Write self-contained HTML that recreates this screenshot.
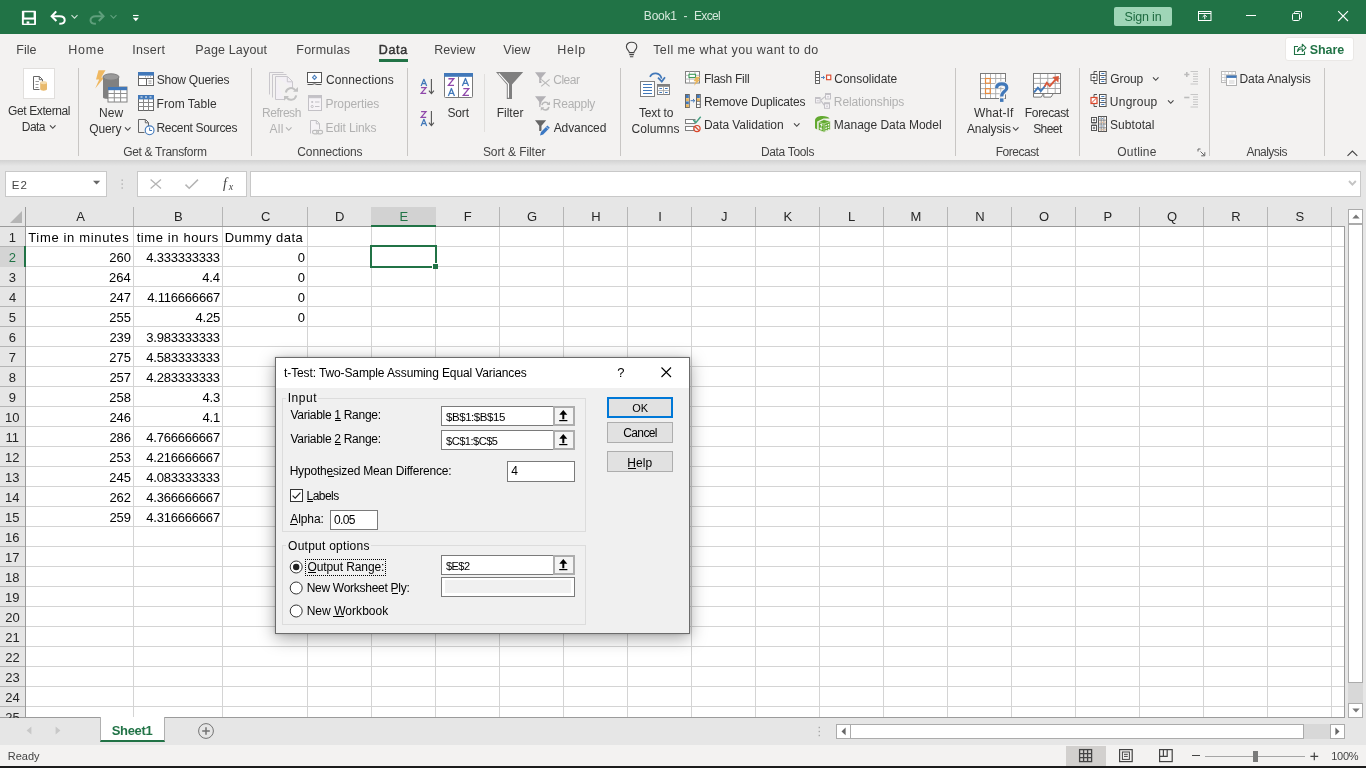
<!DOCTYPE html>
<html><head><meta charset="utf-8"><title>Book1 - Excel</title>
<style>
html,body{margin:0;padding:0;}
body{width:1366px;height:768px;overflow:hidden;position:relative;background:#e6e6e6;font-family:"Liberation Sans",sans-serif;color:#262626;}
#w{position:absolute;left:0;top:0;width:1366px;height:768px;overflow:hidden;will-change:transform;}
#w>div,#w>svg,.a{position:absolute;box-sizing:border-box;}
.t{position:absolute;white-space:pre;line-height:1;font-family:"Liberation Sans",sans-serif;}
</style></head>
<body>
<div id="w">
<div style="left:0px;top:0px;width:1366px;height:34px;background:#217346;"></div>
<span class="t" style="left:643.85px;top:10.00px;font-size:12px;letter-spacing:-0.209px;color:#d5e8dc;">Book1</span>
<span class="t" style="left:683.54px;top:10.00px;font-size:12px;color:#d5e8dc;">-</span>
<span class="t" style="left:693.95px;top:10.00px;font-size:12px;letter-spacing:-0.647px;color:#d5e8dc;">Excel</span>
<div style="left:1114px;top:7px;width:58px;height:19px;background:#9fd5b7;border-radius:2px;"></div>
<span class="t" style="left:1124.50px;top:11.00px;font-size:12.5px;letter-spacing:-0.183px;color:#1e6b41;">Sign in</span>
<div style="left:0px;top:34px;width:1366px;height:126px;background:#f3f2f1;"></div>
<div style="left:0px;top:160px;width:1366px;height:6px;background:linear-gradient(#d2d2d2,#e6e6e6);"></div>
<span class="t" style="left:16.35px;top:44.00px;font-size:12.5px;letter-spacing:-0.048px;color:#444;">File</span>
<span class="t" style="left:68.35px;top:44.00px;font-size:12.5px;letter-spacing:0.722px;color:#444;">Home</span>
<span class="t" style="left:132.29px;top:44.00px;font-size:12.5px;letter-spacing:0.304px;color:#444;">Insert</span>
<span class="t" style="left:195.35px;top:44.00px;font-size:12.5px;letter-spacing:0.152px;color:#444;">Page Layout</span>
<span class="t" style="left:296.35px;top:44.00px;font-size:12.5px;letter-spacing:0.210px;color:#444;">Formulas</span>
<span class="t" style="left:378.65px;top:44.00px;font-size:12.5px;letter-spacing:0.752px;color:#333;-webkit-text-stroke:0.45px #333;">Data</span>
<div style="left:379px;top:59px;width:29px;height:3px;background:#217346;"></div>
<span class="t" style="left:434.35px;top:44.00px;font-size:12.5px;color:#444;">Review</span>
<span class="t" style="left:503.18px;top:44.00px;font-size:12.5px;letter-spacing:0.106px;color:#444;">View</span>
<span class="t" style="left:557.35px;top:44.00px;font-size:12.5px;letter-spacing:0.746px;color:#444;">Help</span>
<span class="t" style="left:653.16px;top:44.00px;font-size:12.5px;letter-spacing:0.420px;color:#444;">Tell me what you want to do</span>
<div style="left:1285px;top:37px;width:69px;height:24px;background:#fff;border:1px solid #eae8e6;border-radius:3px;"></div>
<span class="t" style="left:1309.67px;top:44.00px;font-size:12.5px;letter-spacing:-0.047px;color:#217346;font-weight:bold;">Share</span>
<div style="left:78px;top:68px;width:1px;height:88px;background:#c8c6c4;"></div>
<div style="left:251px;top:68px;width:1px;height:88px;background:#c8c6c4;"></div>
<div style="left:407px;top:68px;width:1px;height:88px;background:#c8c6c4;"></div>
<div style="left:620px;top:68px;width:1px;height:88px;background:#c8c6c4;"></div>
<div style="left:955px;top:68px;width:1px;height:88px;background:#c8c6c4;"></div>
<div style="left:1079px;top:68px;width:1px;height:88px;background:#c8c6c4;"></div>
<div style="left:1209px;top:68px;width:1px;height:88px;background:#c8c6c4;"></div>
<div style="left:1324px;top:68px;width:1px;height:88px;background:#c8c6c4;"></div>
<div style="left:484px;top:74px;width:1px;height:58px;background:#e1dfdd;"></div>
<div style="left:23px;top:68px;width:32px;height:31px;background:#fff;border:1px solid #e1dfdd;"></div>
<span class="t" style="left:8.06px;top:105.00px;font-size:12px;letter-spacing:-0.386px;color:#333;">Get External</span>
<span class="t" style="left:21.85px;top:121.00px;font-size:12px;letter-spacing:-0.555px;color:#333;">Data</span>
<svg class="a" style="left:49px;top:124px" width="7.5" height="6" viewBox="0 0 7.5 6"><path d="M1 1.3L3.75 4.3L6.5 1.3" stroke="#444" stroke-width="1.1" fill="none"/></svg>
<span class="t" style="left:98.95px;top:107.00px;font-size:12px;letter-spacing:0.064px;color:#333;">New</span>
<span class="t" style="left:89.21px;top:123.00px;font-size:12px;letter-spacing:-0.111px;color:#333;">Query</span>
<svg class="a" style="left:123.8px;top:125.5px" width="7.5" height="6" viewBox="0 0 7.5 6"><path d="M1 1.3L3.75 4.3L6.5 1.3" stroke="#444" stroke-width="1.1" fill="none"/></svg>
<span class="t" style="left:156.68px;top:74.00px;font-size:12px;letter-spacing:-0.230px;color:#333;">Show Queries</span>
<span class="t" style="left:156.55px;top:98.00px;font-size:12px;letter-spacing:0.028px;color:#333;">From Table</span>
<span class="t" style="left:156.55px;top:122.00px;font-size:12px;letter-spacing:-0.346px;color:#333;">Recent Sources</span>
<span class="t" style="left:123.16px;top:146.00px;font-size:12px;letter-spacing:-0.305px;color:#444;">Get &amp; Transform</span>
<span class="t" style="left:262.05px;top:107.00px;font-size:12px;letter-spacing:-0.458px;color:#b1b1b1;">Refresh</span>
<span class="t" style="left:269.42px;top:123.00px;font-size:12px;letter-spacing:0.287px;color:#b1b1b1;">All</span>
<svg class="a" style="left:285.2px;top:125.5px" width="7.5" height="6" viewBox="0 0 7.5 6"><path d="M1 1.3L3.75 4.3L6.5 1.3" stroke="#b1b1b1" stroke-width="1.1" fill="none"/></svg>
<span class="t" style="left:325.96px;top:74.00px;font-size:12px;letter-spacing:0.120px;color:#333;">Connections</span>
<span class="t" style="left:325.55px;top:98.00px;font-size:12px;letter-spacing:-0.098px;color:#b1b1b1;">Properties</span>
<span class="t" style="left:325.55px;top:122.00px;font-size:12px;letter-spacing:-0.128px;color:#b1b1b1;">Edit Links</span>
<span class="t" style="left:297.36px;top:146.00px;font-size:12px;letter-spacing:-0.157px;color:#444;">Connections</span>
<span class="t" style="left:447.48px;top:107.00px;font-size:12px;letter-spacing:-0.149px;color:#333;">Sort</span>
<span class="t" style="left:496.65px;top:107.00px;font-size:12px;letter-spacing:0.015px;color:#333;">Filter</span>
<span class="t" style="left:553.26px;top:74.00px;font-size:12px;letter-spacing:-0.497px;color:#b1b1b1;">Clear</span>
<span class="t" style="left:552.85px;top:98.00px;font-size:12px;letter-spacing:-0.253px;color:#b1b1b1;">Reapply</span>
<span class="t" style="left:553.72px;top:122.00px;font-size:12px;letter-spacing:-0.111px;color:#333;">Advanced</span>
<span class="t" style="left:482.88px;top:146.00px;font-size:12px;letter-spacing:-0.061px;color:#444;">Sort &amp; Filter</span>
<span class="t" style="left:638.88px;top:107.00px;font-size:12px;letter-spacing:-0.124px;color:#333;">Text to</span>
<span class="t" style="left:631.46px;top:123.00px;font-size:12px;letter-spacing:0.109px;color:#333;">Columns</span>
<span class="t" style="left:703.95px;top:73.00px;font-size:12px;letter-spacing:-0.264px;color:#333;">Flash Fill</span>
<span class="t" style="left:703.95px;top:96.00px;font-size:12px;letter-spacing:-0.151px;color:#333;">Remove Duplicates</span>
<span class="t" style="left:703.95px;top:119.00px;font-size:12px;letter-spacing:-0.060px;color:#333;">Data Validation</span>
<svg class="a" style="left:792.6px;top:121.5px" width="7.5" height="6" viewBox="0 0 7.5 6"><path d="M1 1.3L3.75 4.3L6.5 1.3" stroke="#444" stroke-width="1.1" fill="none"/></svg>
<span class="t" style="left:834.26px;top:73.00px;font-size:12px;letter-spacing:-0.034px;color:#333;">Consolidate</span>
<span class="t" style="left:833.85px;top:96.00px;font-size:12px;letter-spacing:-0.129px;color:#b1b1b1;">Relationships</span>
<span class="t" style="left:833.85px;top:119.00px;font-size:12px;letter-spacing:-0.020px;color:#333;">Manage Data Model</span>
<span class="t" style="left:760.95px;top:146.00px;font-size:12px;letter-spacing:-0.333px;color:#444;">Data Tools</span>
<span class="t" style="left:974.07px;top:107.00px;font-size:12px;letter-spacing:0.087px;color:#333;">What-If</span>
<span class="t" style="left:966.92px;top:123.00px;font-size:12px;letter-spacing:-0.098px;color:#333;">Analysis</span>
<svg class="a" style="left:1012px;top:125.5px" width="7.5" height="6" viewBox="0 0 7.5 6"><path d="M1 1.3L3.75 4.3L6.5 1.3" stroke="#444" stroke-width="1.1" fill="none"/></svg>
<span class="t" style="left:1024.85px;top:107.00px;font-size:12px;letter-spacing:-0.334px;color:#333;">Forecast</span>
<span class="t" style="left:1033.18px;top:123.00px;font-size:12px;letter-spacing:-0.557px;color:#333;">Sheet</span>
<span class="t" style="left:995.65px;top:146.00px;font-size:12px;letter-spacing:-0.477px;color:#444;">Forecast</span>
<span class="t" style="left:1110.26px;top:73.00px;font-size:12px;letter-spacing:-0.102px;color:#333;">Group</span>
<svg class="a" style="left:1152.4px;top:75.5px" width="7.5" height="6" viewBox="0 0 7.5 6"><path d="M1 1.3L3.75 4.3L6.5 1.3" stroke="#444" stroke-width="1.1" fill="none"/></svg>
<span class="t" style="left:1109.85px;top:96.00px;font-size:12px;letter-spacing:0.237px;color:#333;">Ungroup</span>
<svg class="a" style="left:1166.5px;top:98.5px" width="7.5" height="6" viewBox="0 0 7.5 6"><path d="M1 1.3L3.75 4.3L6.5 1.3" stroke="#444" stroke-width="1.1" fill="none"/></svg>
<span class="t" style="left:1109.98px;top:119.00px;font-size:12px;letter-spacing:0.060px;color:#333;">Subtotal</span>
<span class="t" style="left:1117.31px;top:146.00px;font-size:12px;letter-spacing:0.174px;color:#444;">Outline</span>
<span class="t" style="left:1239.55px;top:73.00px;font-size:12px;letter-spacing:-0.126px;color:#333;">Data Analysis</span>
<span class="t" style="left:1246.52px;top:146.00px;font-size:12px;letter-spacing:-0.543px;color:#444;">Analysis</span>
<svg class="a" style="left:1346px;top:149px" width="13" height="9" viewBox="0 0 13 9"><path d="M1.5 6.8L6.4 2L11.3 6.8" stroke="#444" stroke-width="1.1" fill="none"/></svg>
<svg class="a" style="left:1197px;top:148px" width="9" height="9" viewBox="0 0 9 9"><path d="M1 3.5V1H3.5M3.5 3.5L7.5 7.5M7.8 4.2V7.8H4.2" stroke="#666" stroke-width="1" fill="none"/></svg>
<svg class="a" style="left:21px;top:10px" width="16" height="16" viewBox="0 0 16 16" ><rect x="0.9" y="0.8" width="14.1" height="14.2" rx="0.8" fill="#fff"/><rect x="3.3" y="2.3" width="9.3" height="5.2" fill="#217346"/><rect x="2.8" y="9.6" width="10.3" height="4" fill="#217346"/><rect x="5.6" y="11.4" width="2.7" height="2.3" fill="#fff"/></svg>
<svg class="a" style="left:50px;top:9px" width="17" height="17" viewBox="0 0 17 17" ><path d="M6.2 2.4L1.7 7.3L6.4 12" fill="none" stroke="#fff" stroke-width="2.1"/><path d="M2 7.3H9.6C13 7.3 14.7 9 14.7 11.2C14.7 13.7 12.6 14.8 9.3 14.8" fill="none" stroke="#fff" stroke-width="2"/></svg>
<svg class="a" style="left:70px;top:14px" width="9" height="6" viewBox="0 0 9 6" ><path d="M1.5 1.2L4.5 4.2L7.5 1.2" fill="none" stroke="#cfe3d7" stroke-width="1.1"/></svg>
<svg class="a" style="left:89px;top:9px" width="17" height="17" viewBox="0 0 17 17" ><path d="M10 2.4L14.5 7.3L9.8 12" fill="none" stroke="#5f9f7c" stroke-width="2.1"/><path d="M14.2 7.3H6.6C3.2 7.3 1.5 9 1.5 11.2C1.5 13.7 3.6 14.8 6.9 14.8" fill="none" stroke="#5f9f7c" stroke-width="2"/></svg>
<svg class="a" style="left:109px;top:14px" width="9" height="6" viewBox="0 0 9 6" ><path d="M1.5 1.2L4.5 4.2L7.5 1.2" fill="none" stroke="#5f9f7c" stroke-width="1.1"/></svg>
<svg class="a" style="left:132px;top:14px" width="8" height="8" viewBox="0 0 8 8" ><path d="M1 1.5H6.6" stroke="#fff" stroke-width="1.1"/><path d="M0.8 3.8H6.8L3.8 7.2Z" fill="#fff"/></svg>
<svg class="a" style="left:1197px;top:10px" width="16" height="12" viewBox="0 0 16 12" ><rect x="1.5" y="1.5" width="12.5" height="9" fill="none" stroke="#fff" stroke-width="1"/><path d="M1.5 3.5H14" stroke="#fff" stroke-width="1"/><path d="M7.75 9.2V5.2M5.6 7L7.75 4.9L9.9 7" fill="none" stroke="#fff" stroke-width="1"/></svg>
<svg class="a" style="left:1246px;top:15px" width="10" height="1" viewBox="0 0 10 1" ><rect width="10" height="1" fill="#fff"/></svg>
<svg class="a" style="left:1291px;top:10px" width="12" height="12" viewBox="0 0 12 12" ><rect x="1.5" y="3.5" width="7" height="7" rx="1" fill="none" stroke="#fff" stroke-width="1"/><path d="M3.5 3.2V2.5Q3.5 1.5 4.5 1.5H9.5Q10.5 1.5 10.5 2.5V7.5Q10.5 8.5 9.5 8.5H8.8" fill="none" stroke="#fff" stroke-width="1"/></svg>
<svg class="a" style="left:1337px;top:10px" width="12" height="12" viewBox="0 0 12 12" ><path d="M1.2 1.2L11 11M11 1.2L1.2 11" stroke="#fff" stroke-width="1.1"/></svg>
<svg class="a" style="left:624px;top:41px" width="16" height="18" viewBox="0 0 16 18" ><path d="M5.3 11.6C5.3 9.8 2.4 8.6 2.4 5.7C2.4 3.1 4.5 1.3 7.6 1.3C10.7 1.3 12.8 3.1 12.8 5.7C12.8 8.6 9.9 9.8 9.9 11.6Z" fill="none" stroke="#444" stroke-width="1.1"/><path d="M5.3 13.6H9.9M5.9 15.8H9.3" stroke="#444" stroke-width="1.1"/></svg>
<svg class="a" style="left:1293px;top:42px" width="14" height="14" viewBox="0 0 14 14" ><path d="M5 4.5H1.5V12.5H11.5V9.5" fill="none" stroke="#217346" stroke-width="1.1"/><path d="M4.5 9.5C4.8 6.5 6.6 4.8 9.3 4.7V2.2L13 5.8L9.3 9.3V6.8C7.3 6.8 5.6 7.7 4.5 9.5Z" fill="none" stroke="#217346" stroke-width="1.1" stroke-linejoin="round"/></svg>
<svg class="a" style="left:32px;top:75px" width="17" height="17" viewBox="0 0 17 17" ><path d="M1.5 1.5H7.5L10.5 4.5V8M1.5 1.5V14.5H7.5" fill="none" stroke="#666" stroke-width="1"/><path d="M7.3 1.7V4.7H10.3" fill="none" stroke="#666" stroke-width="1"/><path d="M3.5 6.5H7M3.5 9.5H6.5M3.5 12.5H6.5" stroke="#9a9a9a" stroke-width="1"/><path d="M8.2 7.6V14.3C8.2 16.2 15 16.2 15 14.3V7.6" fill="#e9ba6c"/><ellipse cx="11.6" cy="7.6" rx="3.4" ry="1.6" fill="#f5dcae"/></svg>
<svg class="a" style="left:93px;top:69px" width="36" height="34" viewBox="0 0 36 34" ><path d="M5.5 1.2H12.5L8.2 8.5H11.2L2.2 19.5L6.2 10.5H3Z" fill="#efb861"/><path d="M10 8V28.5C10 30.5 26 30.5 26 28.5V8Z" fill="#808080"/><ellipse cx="18" cy="8" rx="8" ry="3.2" fill="#9a9a9a" stroke="#808080" stroke-width="1"/><rect x="15" y="18" width="19" height="15" fill="#fff" stroke="#808080" stroke-width="1"/><rect x="15" y="18" width="19" height="3.2" fill="#4178b9"/><path d="M15 24.5H34M15 28.8H34M21.3 21V33M27.6 21V33" stroke="#909090" stroke-width="1"/></svg>
<svg class="a" style="left:138px;top:71px" width="17" height="16" viewBox="0 0 17 16" ><rect x="0.5" y="1.5" width="15" height="13" fill="#fff" stroke="#666" stroke-width="1"/><rect x="0.5" y="1.5" width="15" height="2.6" fill="#4178b9" stroke="#4178b9"/><path d="M0.5 7.5H15.5M8.5 7.5V14.5" stroke="#666" stroke-width="1"/><path d="M7 5.8H8M9.5 5.8H10.5M12 5.8H13M10.5 10H13.5M10.5 12.2H13.5" stroke="#888" stroke-width="0.9"/></svg>
<svg class="a" style="left:138px;top:94px" width="17" height="18" viewBox="0 0 17 18" ><rect x="0.5" y="1.5" width="15" height="15" fill="#fff" stroke="#666" stroke-width="1"/><rect x="0.5" y="1.5" width="15" height="3.4" fill="#4178b9" stroke="#4178b9"/><path d="M2.5 3H4.5M7 3H9M11.5 3H13.5" stroke="#fff" stroke-width="1"/><path d="M0.5 8.5H15.5M0.5 12.5H15.5M5.5 5V16.5M10.5 5V16.5" stroke="#888" stroke-width="1"/></svg>
<svg class="a" style="left:138px;top:119px" width="18" height="17" viewBox="0 0 18 17" ><path d="M0.5 0.5H7.5L10.5 3.5V8M0.5 0.5V13.5H6.5" fill="none" stroke="#666" stroke-width="1"/><path d="M7.3 0.8V3.8H10.3" fill="none" stroke="#666" stroke-width="1"/><circle cx="11.6" cy="11.3" r="4.4" fill="#fff" stroke="#4178b9" stroke-width="1.1"/><path d="M11.6 8.6V11.5H14" fill="none" stroke="#4178b9" stroke-width="1"/></svg>
<svg class="a" style="left:268px;top:71px" width="32" height="32" viewBox="0 0 32 32" ><path d="M1.5 23.5V1.5H15.5" fill="none" stroke="#c9c7cc" stroke-width="1"/><path d="M4.5 26.5V3.5H18.5" fill="none" stroke="#c9c7cc" stroke-width="1"/><path d="M7.5 5.5H19.5L24.5 10.5V17M7.5 5.5V28.5H16" fill="#f3f0f5" stroke="#c9c7cc" stroke-width="1"/><path d="M19.3 5.8V10.8H24.3" fill="none" stroke="#c9c7cc" stroke-width="1"/><path d="M17.8 21.5A5.3 5.3 0 0 1 27.3 19.2" fill="none" stroke="#c2c2c2" stroke-width="2"/><path d="M28.2 24.3A5.3 5.3 0 0 1 18.7 26.6" fill="none" stroke="#c2c2c2" stroke-width="2"/><path d="M25 20.8H30V16Z" fill="#c2c2c2"/><path d="M21 25H16V29.8Z" fill="#c2c2c2"/></svg>
<svg class="a" style="left:306px;top:71px" width="17" height="15" viewBox="0 0 17 15" ><rect x="1.5" y="1.5" width="14" height="10" fill="#fff" stroke="#555" stroke-width="1"/><path d="M1.5 13.5H6Q8.5 12 11 13.5H15.5" fill="none" stroke="#555" stroke-width="1"/><path d="M8.5 3.6L11.2 6.4L8.5 9.2L5.8 6.4Z" fill="#4178b9"/><rect x="7.6" y="5.5" width="1.8" height="1.8" fill="#fff"/></svg>
<svg class="a" style="left:307px;top:94px" width="16" height="18" viewBox="0 0 16 18" ><rect x="1.5" y="1.5" width="13" height="15" fill="#f6f3f7" stroke="#c3c1c6" stroke-width="1"/><rect x="1.5" y="1.5" width="13" height="2.2" fill="#c3c1c6" stroke="#c3c1c6"/><circle cx="5.2" cy="8" r="1.1" fill="#c3c1c6"/><circle cx="5.2" cy="12.5" r="1.1" fill="none" stroke="#c3c1c6"/><path d="M8 8H12.5M8 12.5H12.5" stroke="#c3c1c6" stroke-width="1"/></svg>
<svg class="a" style="left:309px;top:119px" width="15" height="17" viewBox="0 0 15 17" ><path d="M1.5 14.5V1.5H7.5L10.5 4.5V10" fill="#f6f3f7" stroke="#c3c1c6" stroke-width="1"/><path d="M7.3 1.8V4.8H10.3" fill="none" stroke="#c3c1c6" stroke-width="1"/><rect x="3.5" y="11.3" width="6" height="3.6" rx="1.8" fill="none" stroke="#bdbdbd" stroke-width="1.2"/><rect x="7.6" y="11.3" width="6" height="3.6" rx="1.8" fill="none" stroke="#bdbdbd" stroke-width="1.2"/></svg>
<svg class="a" style="left:420px;top:78px" width="16" height="17" viewBox="0 0 16 17" ><path d="M1.125 8L3.9000000000000004 1.3L6.675000000000001 8M1.9800000000000002 5.62H5.820000000000001" fill="none" stroke="#4178b9" stroke-width="1.25" stroke-linejoin="round"/><path d="M1.1 9.625H6.0L1.1 15.375H6.2" fill="none" stroke="#8f48aa" stroke-width="1.25" stroke-linejoin="miter"/><path d="M11.4 1V15.6M8.9 12.6L11.4 15.6L13.9 12.6" fill="none" stroke="#555" stroke-width="1.1"/></svg>
<svg class="a" style="left:420px;top:110px" width="16" height="17" viewBox="0 0 16 17" ><path d="M1.1 1.625H6.0L1.1 7.375H6.2" fill="none" stroke="#8f48aa" stroke-width="1.25" stroke-linejoin="miter"/><path d="M1.125 16L3.9000000000000004 9.3L6.675000000000001 16M1.9800000000000002 13.620000000000001H5.820000000000001" fill="none" stroke="#4178b9" stroke-width="1.25" stroke-linejoin="round"/><path d="M11.4 1V15.6M8.9 12.6L11.4 15.6L13.9 12.6" fill="none" stroke="#555" stroke-width="1.1"/></svg>
<svg class="a" style="left:444px;top:72px" width="30" height="27" viewBox="0 0 30 27" ><rect x="0.5" y="1.5" width="28" height="24" rx="1" fill="#fff" stroke="#7a7a7a" stroke-width="1"/><rect x="0" y="1" width="29" height="3.8" fill="#4178b9"/><path d="M14.5 4.8V25.5" stroke="#7a7a7a" stroke-width="1"/><path d="M4.3999999999999995 6.75H9.8L4.3999999999999995 13.45H10.0" fill="none" stroke="#8f48aa" stroke-width="1.3" stroke-linejoin="miter"/><path d="M4.35 23.9L7.4 16.5L10.45 23.9M5.3 21.282H9.5" fill="none" stroke="#4178b9" stroke-width="1.3" stroke-linejoin="round"/><path d="M18.349999999999998 14.1L21.45 6.3999999999999995L24.55 14.1M19.32 11.379999999999999H23.58" fill="none" stroke="#4178b9" stroke-width="1.3" stroke-linejoin="round"/><path d="M19.3 16.65H24.8L19.3 23.35H25" fill="none" stroke="#8f48aa" stroke-width="1.3" stroke-linejoin="miter"/></svg>
<svg class="a" style="left:495px;top:71px" width="30" height="29" viewBox="0 0 30 29" ><path d="M1 1H28.2L17 13.5V28H11.8V13.5Z" fill="#7f7f7f"/><path d="M3.8 2.3L13.4 12.9V26.8" fill="none" stroke="#fff" stroke-width="1.2"/></svg>
<svg class="a" style="left:534px;top:71px" width="18" height="17" viewBox="0 0 18 17" ><path d="M1 1.2H12.2L7.5 6.8V11.9H5.2V6.8Z" fill="#b3b1b5"/><path d="M7.2 8.4L15.6 15.4M15.6 8.4L7.2 15.4" stroke="#f3f2f1" stroke-width="2.6"/><path d="M7.2 8.4L15.6 15.4M15.6 8.4L7.2 15.4" stroke="#b9b9b9" stroke-width="1.2"/></svg>
<svg class="a" style="left:534px;top:95px" width="18" height="18" viewBox="0 0 18 18" ><path d="M1 1.2H12.2L7.5 6.8V11.9H5.2V6.8Z" fill="#b3b1b5"/><circle cx="11.4" cy="11.1" r="5" fill="#f3f2f1"/><path d="M7.9 10.2A3.6 3.6 0 0 1 14.4 8.8" fill="none" stroke="#b9b9b9" stroke-width="1.6"/><path d="M14.9 12A3.6 3.6 0 0 1 8.4 13.4" fill="none" stroke="#b9b9b9" stroke-width="1.6"/><path d="M12.6 9.9H16V6.5Z" fill="#b9b9b9"/><path d="M10.2 12.3H6.8V15.7Z" fill="#b9b9b9"/></svg>
<svg class="a" style="left:534px;top:119px" width="18" height="17" viewBox="0 0 18 17" ><path d="M1 1.2H12.2L7.5 6.8V11.9H5.2V6.8Z" fill="#666"/><path d="M13.4 6.4L15.8 8.8L9.2 15.4L6 16.4L7 13Z" fill="#f3f2f1" stroke="#f3f2f1" stroke-width="1.4"/><path d="M13.4 6.4L15.8 8.8L9.2 15.4L6 16.4L7 13Z" fill="#3b78c3"/><path d="M12.2 7.8L14.4 10" stroke="#f3f2f1" stroke-width="0.7"/></svg>
<svg class="a" style="left:639px;top:71px" width="32" height="27" viewBox="0 0 32 27" ><rect x="1.5" y="10.5" width="14" height="15" fill="#fff" stroke="#808080" stroke-width="1"/><path d="M4 13.5H13M4 16.5H13M4 19.5H13M4 22.5H13" stroke="#4178b9" stroke-width="1"/><rect x="18.5" y="13.5" width="12" height="10" fill="#fff" stroke="#808080" stroke-width="1"/><rect x="18.5" y="13.5" width="12" height="2.3" fill="#808080"/><path d="M24.5 16V23.5M18.5 19.6H30.5" stroke="#a0a0a0" stroke-width="0.8"/><path d="M20.3 17.5H23M26 17.5H28.7M20.3 21.5H23M26 21.5H28.7" stroke="#4178b9" stroke-width="1"/><path d="M11 5.8C13 1.2 21 0.6 22.6 7.6" fill="none" stroke="#4178b9" stroke-width="1.7"/><path d="M19 6.6L22.8 10.6L26 6.2" fill="none" stroke="#4178b9" stroke-width="1.7"/></svg>
<svg class="a" style="left:684px;top:70px" width="18" height="17" viewBox="0 0 18 17" ><rect x="1.5" y="1.5" width="14" height="11.5" fill="#fff" stroke="#808080" stroke-width="1"/><path d="M1.5 5.3H15.5M1.5 9.1H15.5M5.5 1.5V13M11 1.5V5" stroke="#b0b0b0" stroke-width="0.9"/><rect x="5" y="4.3" width="6.5" height="3.2" fill="#fff" stroke="#3f9c5a" stroke-width="1.1"/><path d="M12 6.8H16.5L14 10H16L10 15.8L11.8 11.3H9.6Z" fill="#eab65c"/></svg>
<svg class="a" style="left:684px;top:93px" width="18" height="16" viewBox="0 0 18 16" ><rect x="1.5" y="1.5" width="3.8" height="13" fill="#fff" stroke="#666" stroke-width="1"/><rect x="2" y="2" width="2.8" height="3" fill="#4178b9"/><rect x="2" y="5.2" width="2.8" height="3" fill="#eab65c"/><rect x="2" y="8.4" width="2.8" height="3" fill="#4178b9"/><rect x="2" y="11.4" width="2.8" height="2.8" fill="#eab65c"/><rect x="12.5" y="1.5" width="3.8" height="13" fill="#fff" stroke="#666" stroke-width="1"/><rect x="13" y="2" width="2.8" height="3" fill="#4178b9"/><rect x="13" y="5.2" width="2.8" height="3" fill="#eab65c"/><path d="M12.5 8.4H16.3M12.5 11.4H16.3" stroke="#666" stroke-width="0.8"/><path d="M6.6 7.7H10.6M9 6L10.8 7.7L9 9.4" fill="none" stroke="#4178b9" stroke-width="1"/></svg>
<svg class="a" style="left:684px;top:115px" width="19" height="19" viewBox="0 0 19 19" ><rect x="1.5" y="4.5" width="9.5" height="4" fill="#fff" stroke="#808080" stroke-width="1"/><rect x="1.5" y="11.5" width="8.5" height="4" fill="#fff" stroke="#808080" stroke-width="1"/><path d="M9.2 5L11.8 7.6L16.7 1.7" fill="none" stroke="#45a081" stroke-width="1.4"/><circle cx="13" cy="13.6" r="3.1" fill="#f3f2f1" stroke="#d9472b" stroke-width="1.2"/><path d="M10.9 11.5L15.1 15.7" stroke="#d9472b" stroke-width="1.2"/></svg>
<svg class="a" style="left:814px;top:70px" width="18" height="15" viewBox="0 0 18 15" ><rect x="1.5" y="1.5" width="4" height="12" fill="#fff" stroke="#666" stroke-width="1"/><path d="M1.5 4.5H5.5M1.5 7.5H5.5M1.5 10.5H5.5" stroke="#666" stroke-width="1"/><path d="M7 7.5H10.4M9 6L10.6 7.5L9 9" fill="none" stroke="#4178b9" stroke-width="0.9"/><rect x="12.6" y="5.1" width="4.2" height="4.6" fill="#fff" stroke="#d9472b" stroke-width="1.1"/></svg>
<svg class="a" style="left:814px;top:92px" width="18" height="18" viewBox="0 0 18 18" ><path d="M6.5 8.2L11 4.6M6.5 8.2L10.4 13.4" stroke="#c3c1c6" stroke-width="1.1"/><rect x="1.5" y="5.5" width="4.6" height="5.4" fill="#f6f3f7" stroke="#c3c1c6" stroke-width="1"/><path d="M1.5 6.2H6.1" stroke="#c3c1c6" stroke-width="1.6"/><path d="M2.8 8.799999999999999H4.8" stroke="#c3c1c6" stroke-width="0.9"/><rect x="11.5" y="1.5" width="5" height="5.5" fill="#f6f3f7" stroke="#c3c1c6" stroke-width="1"/><path d="M11.5 2.2H16.5" stroke="#c3c1c6" stroke-width="1.6"/><path d="M13.0 4.85H15.0" stroke="#c3c1c6" stroke-width="0.9"/><rect x="10.5" y="10.8" width="5" height="5.5" fill="#f6f3f7" stroke="#c3c1c6" stroke-width="1"/><path d="M10.5 11.5H15.5" stroke="#c3c1c6" stroke-width="1.6"/><path d="M12.0 14.15H14.0" stroke="#c3c1c6" stroke-width="0.9"/></svg>
<svg class="a" style="left:814px;top:115px" width="18" height="18" viewBox="0 0 18 18" ><path d="M1 5.6C1 2.4 4.6 1 8.4 1C11.8 1 14.8 1.9 15.6 3.5L9.6 3.4L3.2 6.4V14.6L1 13.2Z" fill="#62a930"/><path d="M4.3 7L9.9 4.5L16.3 6.2V14.6L10 17.2L4.3 15Z" fill="#62a930" stroke="#f3f2f1" stroke-width="0.7"/><path d="M4.6 7.1L10 8.9L16 6.5M10 8.9V16.8" fill="none" stroke="#cfe6b8" stroke-width="0.7"/><path d="M11.4 10.2L12.8 9.7V11.1L11.4 11.6ZM13.8 9.3L15.2 8.8V10.2L13.8 10.7ZM11.4 12.8L12.8 12.3V13.7L11.4 14.2ZM13.8 11.9L15.2 11.4V12.8L13.8 13.3ZM11.4 15.2L12.8 14.7V15.7L11.4 16.3ZM13.8 14.4L15.2 13.9V14.9L13.8 15.5Z" fill="#fff"/><path d="M5.6 13.2L8.4 14.2M7 12.2V15.2M6.2 9.6L7.4 9L8.4 10.4M7.4 9.2V11.6" fill="none" stroke="#fff" stroke-width="0.9"/></svg>
<svg class="a" style="left:979px;top:72px" width="32" height="32" viewBox="0 0 32 32" ><rect x="1.5" y="1.5" width="25" height="25" fill="#fff" stroke="#7a7a7a" stroke-width="1"/><path d="M2 6.5H26M2 11.5H26M2 16.6H26M2 21.7H26M6.5 2V26M11.5 2V26M16.7 2V26M21.8 2V26" stroke="#a8a8a8" stroke-width="0.9"/><rect x="6.5" y="6.5" width="4.7" height="4.7" fill="#fff" stroke="#e98a3a" stroke-width="1.2"/><rect x="6.5" y="16.7" width="4.7" height="4.7" fill="#fff" stroke="#e98a3a" stroke-width="1.2"/><path d="M17.6 16.2C17.6 13 20 11.9 22.8 11.9C25.8 11.9 27.8 13.4 27.8 15.9C27.8 19.6 22.7 19.2 22.7 24.4" fill="none" stroke="#f3f2f1" stroke-width="5.6"/><rect x="20" y="25.4" width="5.5" height="5.5" fill="#f3f2f1"/><path d="M17.6 16.2C17.6 13 20 11.9 22.8 11.9C25.8 11.9 27.8 13.4 27.8 15.9C27.8 19.6 22.7 19.2 22.7 24.4" fill="none" stroke="#4178b9" stroke-width="3.2"/><rect x="21" y="26.4" width="3.5" height="3.5" fill="#4178b9"/></svg>
<svg class="a" style="left:1032px;top:72px" width="30" height="27" viewBox="0 0 30 27" ><path d="M1.5 21.5V25.1H9.3L11.3 21.5M11.8 21.5V25.1H19L21.3 21.5" fill="#fff" stroke="#7a7a7a" stroke-width="1"/><rect x="1.5" y="1.5" width="27" height="20" fill="#fff" stroke="#7a7a7a" stroke-width="1"/><path d="M2 6.4H28M2 11.4H28M2 16.5H28M8.4 2V21M15.8 2V21M23.2 2V21" stroke="#a0a0a0" stroke-width="0.9"/><path d="M2 20.4L5.9 15.8L8.9 19L13 14" fill="none" stroke="#4178b9" stroke-width="1.9"/><path d="M12.6 14.4L14.8 10.8L17.8 14.1L25 5.8" fill="none" stroke="#d8583a" stroke-width="1.9"/><path d="M20.2 4.9L26.9 4.1L26.4 10.6Z" fill="#d8583a"/></svg>
<svg class="a" style="left:1090px;top:70px" width="18" height="15" viewBox="0 0 18 15" ><path d="M7 1.5H4V4M4 11V13.5H7" fill="none" stroke="#555" stroke-width="1"/><rect x="1" y="4.5" width="6" height="6" fill="#fff" stroke="#555" stroke-width="1"/><path d="M2.6 7.5H5.4M4 6.1V8.9" stroke="#555" stroke-width="1"/><rect x="9.5" y="1.5" width="6.6" height="12" fill="#fff" stroke="#555" stroke-width="1"/><path d="M9.5 5.5H16M9.5 9.5H16" stroke="#555" stroke-width="0.9"/><path d="M11.3 3.5H14.4M11.3 7.5H14.4M11.3 11.5H14.4" stroke="#4178b9" stroke-width="1.1"/></svg>
<svg class="a" style="left:1090px;top:93px" width="18" height="15" viewBox="0 0 18 15" ><path d="M7 1.5H4V4M4 11V13.5H7" fill="none" stroke="#555" stroke-width="1"/><rect x="1" y="4.5" width="6" height="6" fill="#fff" stroke="#d9472b" stroke-width="1.2"/><path d="M1.5 10L6.5 5" stroke="#d9472b" stroke-width="1"/><rect x="9.5" y="1.5" width="6.6" height="12" fill="#fff" stroke="#555" stroke-width="1"/><path d="M9.5 5.5H16M9.5 9.5H16" stroke="#555" stroke-width="0.9"/><path d="M11.3 3.5H14.4M11.3 7.5H14.4M11.3 11.5H14.4" stroke="#4178b9" stroke-width="1.1"/></svg>
<svg class="a" style="left:1090px;top:115px" width="18" height="18" viewBox="0 0 18 18" ><rect x="1.5" y="2.5" width="5" height="5" fill="#fff" stroke="#555" stroke-width="1"/><path d="M2.7 5H5.3M4 3.7V6.3" stroke="#555" stroke-width="0.9"/><rect x="1.5" y="10.5" width="5" height="5" fill="#fff" stroke="#555" stroke-width="1"/><path d="M2.7 13H5.3M4 11.7V14.3" stroke="#555" stroke-width="0.9"/><path d="M6.5 9H1.5" stroke="#555" stroke-width="0.9"/><rect x="8.5" y="1.5" width="8" height="15" fill="#fff" stroke="#555" stroke-width="1"/><path d="M8.5 5.2H16.5M8.5 9H16.5M8.5 12.8H16.5M11.2 1.5V16.5M13.9 1.5V16.5" stroke="#777" stroke-width="0.8"/><path d="M9.6 3.6H10.4M12.2 3.6H13M9.6 11H10.4M12.2 11H13" stroke="#4178b9" stroke-width="1"/><path d="M9.6 7.2H10.4M12.2 7.2H13M14.8 7.2H15.6M9.6 14.8H10.4M12.2 14.8H13M14.8 14.8H15.6" stroke="#e98a3a" stroke-width="1"/></svg>
<svg class="a" style="left:1183px;top:70px" width="16" height="15" viewBox="0 0 16 15" ><path d="M1.2 4.5H6.4M3.8 1.9V7.1" stroke="#bcbcbc" stroke-width="1.6"/><path d="M7.5 1.5H15M10 4H15M10 6.5H15M10 9H15M10 11.5H15M7.5 14H15" stroke="#c6c6c6" stroke-width="1"/></svg>
<svg class="a" style="left:1183px;top:93px" width="16" height="15" viewBox="0 0 16 15" ><path d="M1.2 4.5H6.4" stroke="#bcbcbc" stroke-width="1.6"/><path d="M7.5 1.5H15M10 4H15M10 6.5H15M10 9H15M10 11.5H15M7.5 14H15" stroke="#c6c6c6" stroke-width="1"/></svg>
<svg class="a" style="left:1220px;top:70px" width="18" height="17" viewBox="0 0 18 17" ><rect x="1.5" y="1.5" width="14" height="11" fill="#fff" stroke="#b8b8b8" stroke-width="1"/><path d="M1.5 4.5H15.5M1.5 7.5H15.5M1.5 10.5H15.5M5 1.5V12.5M8.5 1.5V12.5M12 1.5V12.5" stroke="#c8c8c8" stroke-width="0.8"/><rect x="6.5" y="5.5" width="10" height="10" fill="#fff" stroke="#b0b0b0" stroke-width="1"/><rect x="6.5" y="5.5" width="10" height="2.4" fill="#4178b9"/><path d="M9 11H14.5M9 13H14.5" stroke="#c0c0c0" stroke-width="0.8"/></svg>
<div style="left:5px;top:171px;width:102px;height:26px;background:#fff;border:1px solid #c8c8c8;"></div>
<span class="t" style="left:11.85px;top:180.00px;font-size:11.5px;letter-spacing:0.893px;color:#444;">E2</span>
<div style="left:137px;top:171px;width:110px;height:26px;background:#fff;border:1px solid #c8c8c8;"></div>
<div style="left:250px;top:171px;width:1111px;height:26px;background:#fff;border:1px solid #c8c8c8;"></div>
<svg class="a" style="left:92px;top:180px" width="10" height="6" viewBox="0 0 10 6" ><path d="M1 0.8H8.2L4.6 4.6Z" fill="#666"/></svg>
<svg class="a" style="left:121px;top:179px" width="3" height="11" viewBox="0 0 3 11" ><rect x="0.5" y="0.5" width="1.4" height="1.4" fill="#b0b0b0"/><rect x="0.5" y="4.4" width="1.4" height="1.4" fill="#b0b0b0"/><rect x="0.5" y="8.3" width="1.4" height="1.4" fill="#b0b0b0"/></svg>
<svg class="a" style="left:149px;top:178px" width="14" height="12" viewBox="0 0 14 12" ><path d="M1.6 1.6L12 10.6M12 1.6L1.6 10.6" stroke="#b4b4b4" stroke-width="1.3"/></svg>
<svg class="a" style="left:184px;top:178px" width="16" height="12" viewBox="0 0 16 12" ><path d="M1.5 6.6L5.2 10.2L14 1.6" fill="none" stroke="#b4b4b4" stroke-width="1.5"/></svg>
<span class="t" style="left:223.00px;top:177.00px;font-size:14px;color:#444;font-family:'Liberation Serif',serif;font-style:italic;">f</span>
<span class="t" style="left:228.80px;top:182.00px;font-size:10px;color:#444;font-family:'Liberation Serif',serif;font-style:italic;">x</span>
<svg class="a" style="left:1348px;top:180px" width="9" height="7" viewBox="0 0 9 7" ><path d="M1 1L4.4 4.6L7.8 1" fill="none" stroke="#c4c4c4" stroke-width="1.9"/></svg>
<div style="left:26px;top:227px;width:1319px;height:491px;background:#fff;"></div>
<svg class="a" style="left:0;top:0" width="1366" height="768" shape-rendering="crispEdges"><path d="M26 246.5H1344" stroke="#d4d4d4"/><path d="M26 266.5H1344" stroke="#d4d4d4"/><path d="M26 286.5H1344" stroke="#d4d4d4"/><path d="M26 306.5H1344" stroke="#d4d4d4"/><path d="M26 326.5H1344" stroke="#d4d4d4"/><path d="M26 346.5H1344" stroke="#d4d4d4"/><path d="M26 366.5H1344" stroke="#d4d4d4"/><path d="M26 386.5H1344" stroke="#d4d4d4"/><path d="M26 406.5H1344" stroke="#d4d4d4"/><path d="M26 426.5H1344" stroke="#d4d4d4"/><path d="M26 446.5H1344" stroke="#d4d4d4"/><path d="M26 466.5H1344" stroke="#d4d4d4"/><path d="M26 486.5H1344" stroke="#d4d4d4"/><path d="M26 506.5H1344" stroke="#d4d4d4"/><path d="M26 526.5H1344" stroke="#d4d4d4"/><path d="M26 546.5H1344" stroke="#d4d4d4"/><path d="M26 566.5H1344" stroke="#d4d4d4"/><path d="M26 586.5H1344" stroke="#d4d4d4"/><path d="M26 606.5H1344" stroke="#d4d4d4"/><path d="M26 626.5H1344" stroke="#d4d4d4"/><path d="M26 646.5H1344" stroke="#d4d4d4"/><path d="M26 666.5H1344" stroke="#d4d4d4"/><path d="M26 686.5H1344" stroke="#d4d4d4"/><path d="M26 706.5H1344" stroke="#d4d4d4"/><path d="M133.5 227V717" stroke="#d4d4d4"/><path d="M222.5 227V717" stroke="#d4d4d4"/><path d="M307.5 227V717" stroke="#d4d4d4"/><path d="M371.5 227V717" stroke="#d4d4d4"/><path d="M435.5 227V717" stroke="#d4d4d4"/><path d="M499.5 227V717" stroke="#d4d4d4"/><path d="M563.5 227V717" stroke="#d4d4d4"/><path d="M627.5 227V717" stroke="#d4d4d4"/><path d="M691.5 227V717" stroke="#d4d4d4"/><path d="M755.5 227V717" stroke="#d4d4d4"/><path d="M819.5 227V717" stroke="#d4d4d4"/><path d="M883.5 227V717" stroke="#d4d4d4"/><path d="M947.5 227V717" stroke="#d4d4d4"/><path d="M1011.5 227V717" stroke="#d4d4d4"/><path d="M1075.5 227V717" stroke="#d4d4d4"/><path d="M1139.5 227V717" stroke="#d4d4d4"/><path d="M1203.5 227V717" stroke="#d4d4d4"/><path d="M1267.5 227V717" stroke="#d4d4d4"/><path d="M1331.5 227V717" stroke="#d4d4d4"/><path d="M133.5 207V226" stroke="#b5b5b5"/><path d="M222.5 207V226" stroke="#b5b5b5"/><path d="M307.5 207V226" stroke="#b5b5b5"/><path d="M371.5 207V226" stroke="#b5b5b5"/><path d="M435.5 207V226" stroke="#b5b5b5"/><path d="M499.5 207V226" stroke="#b5b5b5"/><path d="M563.5 207V226" stroke="#b5b5b5"/><path d="M627.5 207V226" stroke="#b5b5b5"/><path d="M691.5 207V226" stroke="#b5b5b5"/><path d="M755.5 207V226" stroke="#b5b5b5"/><path d="M819.5 207V226" stroke="#b5b5b5"/><path d="M883.5 207V226" stroke="#b5b5b5"/><path d="M947.5 207V226" stroke="#b5b5b5"/><path d="M1011.5 207V226" stroke="#b5b5b5"/><path d="M1075.5 207V226" stroke="#b5b5b5"/><path d="M1139.5 207V226" stroke="#b5b5b5"/><path d="M1203.5 207V226" stroke="#b5b5b5"/><path d="M1267.5 207V226" stroke="#b5b5b5"/><path d="M1331.5 207V226" stroke="#b5b5b5"/><path d="M0 246.5H25" stroke="#b5b5b5"/><path d="M0 266.5H25" stroke="#b5b5b5"/><path d="M0 286.5H25" stroke="#b5b5b5"/><path d="M0 306.5H25" stroke="#b5b5b5"/><path d="M0 326.5H25" stroke="#b5b5b5"/><path d="M0 346.5H25" stroke="#b5b5b5"/><path d="M0 366.5H25" stroke="#b5b5b5"/><path d="M0 386.5H25" stroke="#b5b5b5"/><path d="M0 406.5H25" stroke="#b5b5b5"/><path d="M0 426.5H25" stroke="#b5b5b5"/><path d="M0 446.5H25" stroke="#b5b5b5"/><path d="M0 466.5H25" stroke="#b5b5b5"/><path d="M0 486.5H25" stroke="#b5b5b5"/><path d="M0 506.5H25" stroke="#b5b5b5"/><path d="M0 526.5H25" stroke="#b5b5b5"/><path d="M0 546.5H25" stroke="#b5b5b5"/><path d="M0 566.5H25" stroke="#b5b5b5"/><path d="M0 586.5H25" stroke="#b5b5b5"/><path d="M0 606.5H25" stroke="#b5b5b5"/><path d="M0 626.5H25" stroke="#b5b5b5"/><path d="M0 646.5H25" stroke="#b5b5b5"/><path d="M0 666.5H25" stroke="#b5b5b5"/><path d="M0 686.5H25" stroke="#b5b5b5"/><path d="M0 706.5H25" stroke="#b5b5b5"/><path d="M0 226.5H1345" stroke="#9b9b9b"/><path d="M25.5 207V717" stroke="#9b9b9b"/><path d="M1344.5 227V717" stroke="#9b9b9b"/><path d="M0 717.5H1345" stroke="#9b9b9b"/></svg>
<svg class="a" style="left:9px;top:210px" width="14" height="14" viewBox="0 0 14 14" ><path d="M13 1V13H1Z" fill="#b5b5b5"/></svg>
<div style="left:371px;top:207px;width:65px;height:20px;background:#d2d2d2;border-bottom:2px solid #217346;"></div>
<div style="left:0px;top:247px;width:26px;height:20px;background:#d4d4d4;"></div>
<div style="left:24px;top:246px;width:2px;height:21px;background:#217346;"></div>
<span class="t" style="left:76.18px;top:210.00px;font-size:13px;color:#262626;">A</span>
<span class="t" style="left:174.00px;top:210.00px;font-size:13px;color:#262626;">B</span>
<span class="t" style="left:260.95px;top:210.00px;font-size:13px;color:#262626;">C</span>
<span class="t" style="left:335.09px;top:210.00px;font-size:13px;color:#262626;">D</span>
<span class="t" style="left:399.44px;top:210.00px;font-size:13px;color:#217346;">E</span>
<span class="t" style="left:463.76px;top:210.00px;font-size:13px;color:#262626;">F</span>
<span class="t" style="left:527.09px;top:210.00px;font-size:13px;color:#262626;">G</span>
<span class="t" style="left:591.31px;top:210.00px;font-size:13px;color:#262626;">H</span>
<span class="t" style="left:658.21px;top:210.00px;font-size:13px;color:#262626;">I</span>
<span class="t" style="left:720.94px;top:210.00px;font-size:13px;color:#262626;">J</span>
<span class="t" style="left:783.42px;top:210.00px;font-size:13px;color:#262626;">K</span>
<span class="t" style="left:848.05px;top:210.00px;font-size:13px;color:#262626;">L</span>
<span class="t" style="left:910.57px;top:210.00px;font-size:13px;color:#262626;">M</span>
<span class="t" style="left:975.31px;top:210.00px;font-size:13px;color:#262626;">N</span>
<span class="t" style="left:1038.94px;top:210.00px;font-size:13px;color:#262626;">O</span>
<span class="t" style="left:1103.50px;top:210.00px;font-size:13px;color:#262626;">P</span>
<span class="t" style="left:1166.95px;top:210.00px;font-size:13px;color:#262626;">Q</span>
<span class="t" style="left:1231.23px;top:210.00px;font-size:13px;color:#262626;">R</span>
<span class="t" style="left:1295.50px;top:210.00px;font-size:13px;color:#262626;">S</span>
<span class="t" style="left:8.67px;top:231.00px;font-size:13px;color:#262626;">1</span>
<span class="t" style="left:8.86px;top:251.00px;font-size:13px;color:#217346;">2</span>
<span class="t" style="left:8.81px;top:271.00px;font-size:13px;color:#262626;">3</span>
<span class="t" style="left:8.92px;top:291.00px;font-size:13px;color:#262626;">4</span>
<span class="t" style="left:8.78px;top:311.00px;font-size:13px;color:#262626;">5</span>
<span class="t" style="left:8.85px;top:331.00px;font-size:13px;color:#262626;">6</span>
<span class="t" style="left:8.86px;top:351.00px;font-size:13px;color:#262626;">7</span>
<span class="t" style="left:8.87px;top:371.00px;font-size:13px;color:#262626;">8</span>
<span class="t" style="left:8.86px;top:391.00px;font-size:13px;color:#262626;">9</span>
<span class="t" style="left:5.00px;top:411.00px;font-size:13px;color:#262626;">10</span>
<span class="t" style="left:5.53px;top:431.00px;font-size:13px;color:#262626;">11</span>
<span class="t" style="left:5.04px;top:451.00px;font-size:13px;color:#262626;">12</span>
<span class="t" style="left:5.02px;top:471.00px;font-size:13px;color:#262626;">13</span>
<span class="t" style="left:5.00px;top:491.00px;font-size:13px;color:#262626;">14</span>
<span class="t" style="left:5.02px;top:511.00px;font-size:13px;color:#262626;">15</span>
<span class="t" style="left:5.04px;top:531.00px;font-size:13px;color:#262626;">16</span>
<span class="t" style="left:5.04px;top:551.00px;font-size:13px;color:#262626;">17</span>
<span class="t" style="left:5.01px;top:571.00px;font-size:13px;color:#262626;">18</span>
<span class="t" style="left:5.04px;top:591.00px;font-size:13px;color:#262626;">19</span>
<span class="t" style="left:5.19px;top:611.00px;font-size:13px;color:#262626;">20</span>
<span class="t" style="left:5.21px;top:631.00px;font-size:13px;color:#262626;">21</span>
<span class="t" style="left:5.22px;top:651.00px;font-size:13px;color:#262626;">22</span>
<span class="t" style="left:5.21px;top:671.00px;font-size:13px;color:#262626;">23</span>
<span class="t" style="left:5.19px;top:691.00px;font-size:13px;color:#262626;">24</span>
<span class="t" style="left:5.21px;top:711.00px;font-size:13px;color:#262626;">25</span>
<div style="left:370px;top:245px;width:67px;height:23px;border:2px solid #217346;"></div>
<div style="left:432px;top:263px;width:6px;height:6px;background:#217346;border:1px solid #fff;border-right:0;border-bottom:0;"></div>
<div style="left:0px;top:718px;width:1366px;height:27px;background:#e6e6e6;"></div>
<div style="left:100px;top:717px;width:65px;height:25px;background:#fff;border-bottom:2px solid #217346;border-left:1px solid #b0b0b0;border-right:1px solid #b0b0b0;"></div>
<span class="t" style="left:111.77px;top:724.00px;font-size:13px;letter-spacing:-0.338px;color:#217346;font-weight:bold;">Sheet1</span>
<div style="left:0px;top:745px;width:1366px;height:21px;background:#f3f2f1;"></div>
<span class="t" style="left:7.75px;top:751.00px;font-size:11px;letter-spacing:-0.007px;color:#444;">Ready</span>
<span class="t" style="left:1331.19px;top:751.00px;font-size:11px;letter-spacing:-0.256px;color:#444;">100%</span>
<div style="left:0px;top:766px;width:1366px;height:2px;background:#1c1c1c;"></div>
<span class="t" style="left:28.24px;top:231.00px;font-size:13px;letter-spacing:0.661px;color:#000;">Time in minutes</span>
<span class="t" style="left:136.63px;top:231.00px;font-size:13px;letter-spacing:0.610px;color:#000;">time in hours</span>
<span class="t" style="left:224.65px;top:231.00px;font-size:13px;letter-spacing:0.492px;color:#000;">Dummy data</span>
<span class="t" style="left:109.18px;top:251.00px;font-size:13px;color:#000;">260</span>
<span class="t" style="left:146.20px;top:251.00px;font-size:13px;color:#000;letter-spacing:-0.2px;">4.333333333</span>
<span class="t" style="left:297.83px;top:251.00px;font-size:13px;color:#000;">0</span>
<span class="t" style="left:109.01px;top:271.00px;font-size:13px;color:#000;">264</span>
<span class="t" style="left:202.21px;top:271.00px;font-size:13px;color:#000;letter-spacing:-0.2px;">4.4</span>
<span class="t" style="left:297.83px;top:271.00px;font-size:13px;color:#000;">0</span>
<span class="t" style="left:109.40px;top:291.00px;font-size:13px;color:#000;">247</span>
<span class="t" style="left:147.23px;top:291.00px;font-size:13px;color:#000;letter-spacing:-0.2px;">4.116666667</span>
<span class="t" style="left:297.83px;top:291.00px;font-size:13px;color:#000;">0</span>
<span class="t" style="left:109.28px;top:311.00px;font-size:13px;color:#000;">255</span>
<span class="t" style="left:195.48px;top:311.00px;font-size:13px;color:#000;letter-spacing:-0.2px;">4.25</span>
<span class="t" style="left:297.83px;top:311.00px;font-size:13px;color:#000;">0</span>
<span class="t" style="left:109.40px;top:331.00px;font-size:13px;color:#000;">239</span>
<span class="t" style="left:146.20px;top:331.00px;font-size:13px;color:#000;letter-spacing:-0.2px;">3.983333333</span>
<span class="t" style="left:109.28px;top:351.00px;font-size:13px;color:#000;">275</span>
<span class="t" style="left:146.20px;top:351.00px;font-size:13px;color:#000;letter-spacing:-0.2px;">4.583333333</span>
<span class="t" style="left:109.40px;top:371.00px;font-size:13px;color:#000;">257</span>
<span class="t" style="left:146.20px;top:371.00px;font-size:13px;color:#000;letter-spacing:-0.2px;">4.283333333</span>
<span class="t" style="left:109.26px;top:391.00px;font-size:13px;color:#000;">258</span>
<span class="t" style="left:202.48px;top:391.00px;font-size:13px;color:#000;letter-spacing:-0.2px;">4.3</span>
<span class="t" style="left:109.40px;top:411.00px;font-size:13px;color:#000;">246</span>
<span class="t" style="left:202.60px;top:411.00px;font-size:13px;color:#000;letter-spacing:-0.2px;">4.1</span>
<span class="t" style="left:109.40px;top:431.00px;font-size:13px;color:#000;">286</span>
<span class="t" style="left:146.23px;top:431.00px;font-size:13px;color:#000;letter-spacing:-0.2px;">4.766666667</span>
<span class="t" style="left:109.28px;top:451.00px;font-size:13px;color:#000;">253</span>
<span class="t" style="left:146.23px;top:451.00px;font-size:13px;color:#000;letter-spacing:-0.2px;">4.216666667</span>
<span class="t" style="left:109.28px;top:471.00px;font-size:13px;color:#000;">245</span>
<span class="t" style="left:146.20px;top:471.00px;font-size:13px;color:#000;letter-spacing:-0.2px;">4.083333333</span>
<span class="t" style="left:109.40px;top:491.00px;font-size:13px;color:#000;">262</span>
<span class="t" style="left:146.23px;top:491.00px;font-size:13px;color:#000;letter-spacing:-0.2px;">4.366666667</span>
<span class="t" style="left:109.40px;top:511.00px;font-size:13px;color:#000;">259</span>
<span class="t" style="left:146.23px;top:511.00px;font-size:13px;color:#000;letter-spacing:-0.2px;">4.316666667</span>
<div style="left:275px;top:357px;width:415px;height:277px;background:#f0f0f0;border:1px solid #6b6b6b;box-shadow:0 4px 16px rgba(0,0,0,.36),0 0 3px rgba(0,0,0,.2);"></div>
<div style="left:276px;top:358px;width:413px;height:30px;background:#fff;"></div>
<span class="t" style="left:284.06px;top:367.00px;font-size:12px;letter-spacing:-0.117px;color:#000;">t-Test: Two-Sample Assuming Equal Variances</span>
<svg class="a" style="left:610px;top:360px" width="72" height="24" viewBox="0 0 72 24"><path d="M51.5 7.5L61 17M61 7.5L51.5 17" stroke="#000" stroke-width="1.1" fill="none"/></svg>
<span class="t" style="left:617.26px;top:366.00px;font-size:13px;color:#000;">?</span>
<div style="left:282px;top:398px;width:304px;height:134px;border:1px solid #dcdcdc;"></div>
<div style="left:282px;top:545px;width:304px;height:80px;border:1px solid #dcdcdc;"></div>
<div style="left:286px;top:392px;width:32px;height:12px;background:#f0f0f0;"></div>
<div style="left:286px;top:540px;width:85px;height:12px;background:#f0f0f0;"></div>
<span class="t" style="left:287.65px;top:392.00px;font-size:12px;letter-spacing:0.565px;color:#000;">Input</span>
<span class="t" style="left:288.11px;top:540.00px;font-size:12px;letter-spacing:0.248px;color:#000;">Output options</span>
<span class="t" style="left:290.51px;top:409.00px;font-size:12px;letter-spacing:-0.294px;color:#000;">Variable 1 Range:</span>
<div style="left:335px;top:420px;width:6px;height:1px;background:#000;"></div>
<span class="t" style="left:290.51px;top:433.00px;font-size:12px;letter-spacing:-0.294px;color:#000;">Variable 2 Range:</span>
<div style="left:335px;top:444px;width:6px;height:1px;background:#000;"></div>
<span class="t" style="left:289.65px;top:465.00px;font-size:12px;letter-spacing:-0.186px;color:#000;">Hypothesized Mean Difference:</span>
<div style="left:328px;top:476px;width:6px;height:1px;background:#000;"></div>
<span class="t" style="left:306.55px;top:490.00px;font-size:12px;letter-spacing:-0.533px;color:#000;">Labels</span>
<div style="left:307px;top:501px;width:6px;height:1px;background:#000;"></div>
<span class="t" style="left:290.22px;top:513.00px;font-size:12px;letter-spacing:-0.082px;color:#000;">Alpha:</span>
<div style="left:290px;top:524px;width:7px;height:1px;background:#000;"></div>
<span class="t" style="left:307.41px;top:561.00px;font-size:12px;letter-spacing:-0.089px;color:#000;">Output Range:</span>
<div style="left:308px;top:572px;width:8px;height:1px;background:#000;"></div>
<span class="t" style="left:306.65px;top:582.00px;font-size:12px;letter-spacing:-0.277px;color:#000;">New Worksheet Ply:</span>
<div style="left:392px;top:593px;width:6px;height:1px;background:#000;"></div>
<span class="t" style="left:306.65px;top:605.00px;font-size:12px;letter-spacing:0.048px;color:#000;">New Workbook</span>
<div style="left:333px;top:616px;width:11px;height:1px;background:#000;"></div>
<div style="left:305px;top:559px;width:81px;height:17px;border:1px dotted #000;"></div>
<div style="left:441px;top:406px;width:113px;height:20px;background:#fff;border:1px solid #7a7a7a;border-right:0;"></div>
<div style="left:553px;top:406px;width:22px;height:20px;background:#f4f4f4;border:2px solid #adadad;"></div>
<svg class="a" style="left:553px;top:406px" width="22" height="20" viewBox="0 0 22 20"><path d="M10.3 4L14.3 8.7H11.3V13.2H9.3V8.7H6.3Z" fill="#000"/><path d="M6.2 14.6H14.4" stroke="#000" stroke-width="1.2"/></svg>
<span class="t" style="left:445.99px;top:412.00px;font-size:11.5px;letter-spacing:-0.436px;color:#000;">$B$1:$B$15</span>
<div style="left:441px;top:430px;width:113px;height:20px;background:#fff;border:1px solid #7a7a7a;border-right:0;"></div>
<div style="left:553px;top:430px;width:22px;height:20px;background:#f4f4f4;border:2px solid #adadad;"></div>
<svg class="a" style="left:553px;top:430px" width="22" height="20" viewBox="0 0 22 20"><path d="M10.3 4L14.3 8.7H11.3V13.2H9.3V8.7H6.3Z" fill="#000"/><path d="M6.2 14.6H14.4" stroke="#000" stroke-width="1.2"/></svg>
<span class="t" style="left:446.01px;top:436.00px;font-size:11.0px;letter-spacing:-0.466px;color:#000;">$C$1:$C$5</span>
<div style="left:441px;top:555px;width:113px;height:20px;background:#fff;border:1px solid #7a7a7a;border-right:0;"></div>
<div style="left:553px;top:555px;width:22px;height:20px;background:#f4f4f4;border:2px solid #adadad;"></div>
<svg class="a" style="left:553px;top:555px" width="22" height="20" viewBox="0 0 22 20"><path d="M10.3 4L14.3 8.7H11.3V13.2H9.3V8.7H6.3Z" fill="#000"/><path d="M6.2 14.6H14.4" stroke="#000" stroke-width="1.2"/></svg>
<span class="t" style="left:446.01px;top:561.00px;font-size:11.0px;letter-spacing:-0.556px;color:#000;">$E$2</span>
<div style="left:507px;top:461px;width:68px;height:21px;background:#fff;border:1px solid #7a7a7a;"></div>
<span class="t" style="left:511.16px;top:465.00px;font-size:12px;color:#000;">4</span>
<div style="left:330px;top:510px;width:48px;height:20px;background:#fff;border:1px solid #7a7a7a;"></div>
<span class="t" style="left:333.92px;top:514.00px;font-size:12px;letter-spacing:-0.585px;color:#000;">0.05</span>
<div style="left:441px;top:577px;width:134px;height:20px;background:#fff;border:1px solid #7a7a7a;"></div>
<div style="left:445px;top:580px;width:126px;height:13px;background:#f0f0f0;"></div>
<div style="left:290px;top:489px;width:13px;height:13px;background:#fff;border:1px solid #333;"></div>
<svg class="a" style="left:290px;top:489px" width="13" height="13" viewBox="0 0 13 13"><path d="M2.6 6.6L5.2 9.2L10.4 3.6" stroke="#222" stroke-width="1.2" fill="none"/></svg>
<svg class="a" style="left:288px;top:558.5px" width="16" height="16" viewBox="0 0 16 16"><circle cx="8.2" cy="8" r="6" fill="#fff" stroke="#333" stroke-width="1"/><circle cx="8.2" cy="8" r="3.2" fill="#222"/></svg>
<svg class="a" style="left:288px;top:579.5px" width="16" height="16" viewBox="0 0 16 16"><circle cx="8.2" cy="8" r="6" fill="#fff" stroke="#333" stroke-width="1"/></svg>
<svg class="a" style="left:288px;top:602.7px" width="16" height="16" viewBox="0 0 16 16"><circle cx="8.2" cy="8" r="6" fill="#fff" stroke="#333" stroke-width="1"/></svg>
<div style="left:607px;top:397px;width:66px;height:21px;background:#e1e1e1;border:2px solid #0078d7;"></div>
<div style="left:607px;top:422px;width:66px;height:21px;background:#e1e1e1;border:1px solid #adadad;"></div>
<div style="left:607px;top:451px;width:66px;height:21px;background:#e1e1e1;border:1px solid #adadad;"></div>
<span class="t" style="left:632.15px;top:403.00px;font-size:11.0px;letter-spacing:0.024px;color:#000;">OK</span>
<span class="t" style="left:623.26px;top:427.00px;font-size:12px;letter-spacing:-0.619px;color:#000;">Cancel</span>
<span class="t" style="left:627.35px;top:457.00px;font-size:12px;letter-spacing:0.041px;color:#000;">Help</span>
<div style="left:628px;top:468px;width:8px;height:1px;background:#000;"></div>
<div style="left:1348px;top:209px;width:15px;height:509px;background:#d8d8d8;"></div>
<div style="left:1348px;top:209px;width:15px;height:15px;background:#fff;border:1px solid #ababab;"></div>
<div style="left:1348px;top:224px;width:15px;height:459px;background:#fff;border:1px solid #ababab;"></div>
<div style="left:1348px;top:703px;width:15px;height:15px;background:#fff;border:1px solid #ababab;"></div>
<svg class="a" style="left:1351.5px;top:214px" width="8" height="5" viewBox="0 0 8 5" ><path d="M0.3 4.6H7.7L4 0.6Z" fill="#777"/></svg>
<svg class="a" style="left:1351.5px;top:708px" width="8" height="5" viewBox="0 0 8 5" ><path d="M0.3 0.4H7.7L4 4.4Z" fill="#777"/></svg>
<div style="left:836px;top:724px;width:509px;height:15px;background:#d8d8d8;"></div>
<div style="left:836px;top:724px;width:15px;height:15px;background:#fff;border:1px solid #ababab;"></div>
<div style="left:851px;top:724px;width:453px;height:15px;background:#fff;border:1px solid #ababab;border-left:0;"></div>
<div style="left:1330px;top:724px;width:15px;height:15px;background:#fff;border:1px solid #ababab;"></div>
<svg class="a" style="left:841px;top:727px" width="5" height="9" viewBox="0 0 5 9" ><path d="M4.6 0.5V8.3L0.5 4.4Z" fill="#666"/></svg>
<svg class="a" style="left:1335px;top:727px" width="5" height="9" viewBox="0 0 5 9" ><path d="M0.4 0.5V8.3L4.5 4.4Z" fill="#666"/></svg>
<svg class="a" style="left:818px;top:726px" width="3" height="12" viewBox="0 0 3 12" ><rect x="0.6" y="0.8" width="1.4" height="1.4" fill="#a8a8a8"/><rect x="0.6" y="4.8" width="1.4" height="1.4" fill="#a8a8a8"/><rect x="0.6" y="8.8" width="1.4" height="1.4" fill="#a8a8a8"/></svg>
<svg class="a" style="left:26px;top:726px" width="6" height="9" viewBox="0 0 6 9" ><path d="M5.4 0.6V8.4L0.6 4.5Z" fill="#c8c8c8"/></svg>
<svg class="a" style="left:55px;top:726px" width="6" height="9" viewBox="0 0 6 9" ><path d="M0.6 0.6V8.4L5.4 4.5Z" fill="#c8c8c8"/></svg>
<svg class="a" style="left:197px;top:722px" width="18" height="18" viewBox="0 0 18 18" ><circle cx="9" cy="9" r="7.4" fill="none" stroke="#737373" stroke-width="1"/><path d="M5.2 9H12.8M9 5.2V12.8" stroke="#737373" stroke-width="1.5"/></svg>
<div style="left:1066px;top:746px;width:40px;height:20px;background:#d2d0ce;"></div>
<svg class="a" style="left:1078px;top:748px" width="16" height="16" viewBox="0 0 16 16" ><rect x="1.6" y="1.6" width="12" height="12" fill="none" stroke="#444" stroke-width="1.3"/><path d="M5.6 1.6V13.6M9.6 1.6V13.6M1.6 5.6H13.6M1.6 9.6H13.6" stroke="#444" stroke-width="1.3"/></svg>
<svg class="a" style="left:1118px;top:748px" width="16" height="16" viewBox="0 0 16 16" ><rect x="1.6" y="1.6" width="12.6" height="12" fill="none" stroke="#444" stroke-width="1.2"/><rect x="4.4" y="4" width="7" height="7.4" fill="none" stroke="#444" stroke-width="1"/><path d="M6 6.3H9.8M6 8.4H9.8" stroke="#444" stroke-width="1"/></svg>
<svg class="a" style="left:1158px;top:748px" width="16" height="16" viewBox="0 0 16 16" ><rect x="1.6" y="1.6" width="12.6" height="12" fill="none" stroke="#444" stroke-width="1.2"/><path d="M5.4 1.6V8.4M9.2 1.6V8.4H1.6M9.2 8.4V8.4" fill="none" stroke="#444" stroke-width="1.2"/></svg>
<div style="left:1192px;top:755px;width:8px;height:1px;background:#444;height:1.3px;"></div>
<div style="left:1205px;top:756px;width:100px;height:1px;background:#a6a6a6;"></div>
<div style="left:1253px;top:751px;width:5px;height:11px;background:#7a7a7a;"></div>
<svg class="a" style="left:1310px;top:752px" width="9" height="9" viewBox="0 0 9 9" ><path d="M0.4 4.4H8.2M4.3 0.5V8.3" stroke="#444" stroke-width="1.2"/></svg>
</div>
</body></html>
